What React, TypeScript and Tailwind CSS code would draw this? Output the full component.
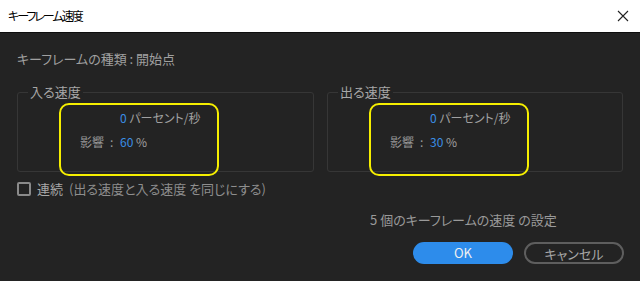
const font = "font-['Noto_Sans_CJK_JP','Noto_Sans',sans-serif] [font-feature-settings:'palt']";

function SpeedGroup({ title, influence }: { title: string; influence: number }) {
  return (
    <fieldset className="relative h-[88px] rounded-[3px] border border-[#363636] pl-[10px]">
      <legend className="px-[2px] text-[13px] leading-[16px] text-[#a8a8a8]">{title}</legend>
      <div className="grid grid-cols-[92px_auto] items-center gap-y-[6px] pt-[9px] text-[12px] leading-[18px]">
        <span />
        <span className="text-[#a0a0a0]">
          <span className="text-[#3a8ee6]">0</span> パーセント/秒
        </span>
        <span className="pl-[52px] text-[#9a9a9a]">
          影響<span className="pl-[6px]">:</span>
        </span>
        <span className="text-[#a0a0a0]">
          <span className="text-[#3a8ee6]">{influence}</span> %
        </span>
      </div>
      {/* annotation */}
      <div className="pointer-events-none absolute left-[41px] top-[3px] h-[73px] w-[160px] rounded-[10px] border-2 border-[#f5ee00]" />
    </fieldset>
  );
}

export default function App() {
  return (
    <div className={`${font} h-[281px] w-[640px] overflow-hidden bg-[#232323]`}>
      {/* Title bar */}
      <div className="flex h-[33px] items-center justify-between border-b border-[#0e0e0e] bg-white pl-[8px] pr-[11px]">
        <span className="text-[12px] tracking-[-2px] text-black">キーフレーム速度</span>
        <svg width="12" height="12" viewBox="0 0 12 12" stroke="#222" strokeWidth="1.1">
          <path d="M1 1L11 11M11 1L1 11" />
        </svg>
      </div>

      <div className="px-[17px]">
        <p className="pt-[17px] text-[13px] leading-[18px] text-[#a0a0a0]">キーフレームの種類 : 開始点</p>

        <div className="mt-[16px] grid grid-cols-[297px_296px] gap-x-[13px]">
          <SpeedGroup title="入る速度" influence={60} />
          <SpeedGroup title="出る速度" influence={30} />
        </div>

        <label className="mt-[8px] flex items-center gap-[6px] text-[13px] leading-[18px]">
          <span className="h-[14px] w-[14px] rounded-[2px] border-2 border-[#8a8a8a]" />
          <span className="text-[#a8a8a8]">連続</span>
          <span className="text-[#8e8e8e]">(出る速度と入る速度 を同じにする)</span>
        </label>

        <p className="mt-[13px] pl-[353px] text-[13px] leading-[18px] text-[#9a9a9a]">5 個のキーフレームの速度 の設定</p>

        <div className="-mr-px mt-[13px] flex justify-end gap-[11px]">
          <button className="h-[22px] w-[100px] rounded-full bg-[#2d8ceb] text-[13px] text-[#f0f0f0]">OK</button>
          <button className="h-[22px] w-[100px] rounded-full border-2 border-[#5e5e5e] text-[13px] text-[#a8a8a8]">キャンセル</button>
        </div>
      </div>
    </div>
  );
}
